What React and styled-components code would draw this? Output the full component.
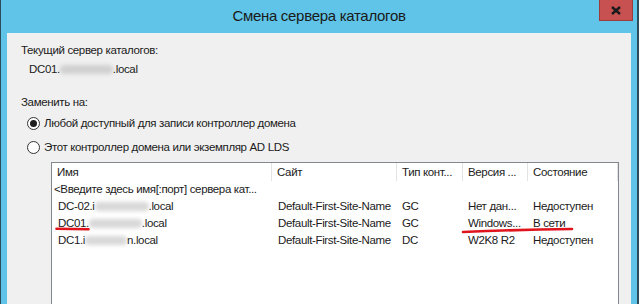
import React from 'react'
import styled, { createGlobalStyle } from 'styled-components'

const GlobalStyle = createGlobalStyle`
  html, body {
    margin: 0;
    padding: 0;
    background: #5fc4e8;
  }
  body {
    font-family: "Liberation Sans", Arial, sans-serif;
    font-size: 11.5px;
    letter-spacing: -0.35px;
    color: #1b1b1b;
  }
`

const Frame = styled.div`
  width: 639px;
  height: 304px;
  box-sizing: border-box;
  background: #5fc4e8;
  border-left: 1px solid #2c4d5c;
  border-right: 2px solid #2c4d5c;
  display: flex;
  flex-direction: column;
  overflow: hidden;
`

const TitleBar = styled.div`
  height: 33px;
  flex: none;
  display: grid;
  grid-template-columns: 1fr auto 1fr;
  align-items: start;
`

const Title = styled.div`
  grid-column: 2;
  font-size: 15px;
  letter-spacing: -0.3px;
  line-height: 32px;
  color: #1a1a1a;
`

const CloseButton = styled.div`
  grid-column: 3;
  justify-self: end;
  margin-right: 4px;
  width: 34px;
  height: 21px;
  box-sizing: border-box;
  background: #c75050;
  border: 1px solid #9b3b3b;
  border-top: none;
  display: flex;
  align-items: center;
  justify-content: center;
`

const Panel = styled.div`
  flex: 1;
  margin: 0 6px;
  background: #f0f0f0;
  padding: 9px 12px 0 14px;
  display: flex;
  flex-direction: column;
`

const Label = styled.div`
  line-height: 16px;
  margin-top: ${p => p.$top || 0}px;
`

const Value = styled.div`
  line-height: 16px;
  margin-top: 3px;
  padding-left: 8px;
`

const Blur = styled.span`
  display: inline-block;
  width: ${p => p.$w}px;
  height: 9px;
  vertical-align: -1px;
  background: #b0b0b0;
  opacity: 0.5;
  filter: blur(2.2px);
  border-radius: 4px;
`

const RadioGroup = styled.div`
  margin-top: 5px;
  padding-left: 6px;
  display: flex;
  flex-direction: column;
  gap: 8px;
`

const RadioRow = styled.div`
  display: flex;
  align-items: center;
  gap: 4px;
  line-height: 16px;
`

const RadioCircle = styled.span`
  width: 13px;
  height: 13px;
  box-sizing: border-box;
  border-radius: 50%;
  border: 1px solid #333;
  background: #fff;
  display: flex;
  align-items: center;
  justify-content: center;
  &::after {
    content: '';
    width: 7px;
    height: 7px;
    border-radius: 50%;
    background: ${p => (p.$checked ? '#1e1e1e' : 'transparent')};
  }
`

const List = styled.div`
  position: relative;
  margin: 7px 0 0 30px;
  flex: 1;
  background: #fff;
  border: 1px solid #828790;
  border-bottom: none;
`

const cols = '220px 125px 66px 65px 90px'

const HeaderRow = styled.div`
  display: grid;
  grid-template-columns: ${cols};
  height: 18px;
`

const HeaderCell = styled.div`
  padding-left: 5px;
  line-height: 18px;
  border-right: 1px solid #e3e3e3;
  white-space: nowrap;
  overflow: hidden;
`

const Row = styled.div`
  display: grid;
  grid-template-columns: ${cols};
  height: 17px;
  line-height: 17px;
`

const Cell = styled.div`
  padding-left: ${p => p.$pad ?? 5}px;
  white-space: nowrap;
  overflow: hidden;
`

const Marks = styled.svg`
  position: absolute;
  left: 0;
  top: 0;
  pointer-events: none;
`

const rows = [
  { name: ['DC-02.i', 54, '.local'], site: 'Default-First-Site-Name', type: 'GC', ver: 'Нет дан...', state: 'Недоступен' },
  { name: ['DC01.', 53, '.local'], site: 'Default-First-Site-Name', type: 'GC', ver: 'Windows...', state: 'В сети' },
  { name: ['DC1.i', 42, 'n.local'], site: 'Default-First-Site-Name', type: 'DC', ver: 'W2K8 R2', state: 'Недоступен' }
]

export default function App() {
  return (
    <>
      <GlobalStyle />
      <Frame>
        <TitleBar>
          <Title>Смена сервера каталогов</Title>
          <CloseButton>
            <svg width="10" height="9" viewBox="0 0 10 9">
              <path d="M1 1 L9 8 M9 1 L1 8" stroke="#1a1a1a" strokeWidth="2.4" />
            </svg>
          </CloseButton>
        </TitleBar>
        <Panel>
          <Label>Текущий сервер каталогов:</Label>
          <Value>
            DC01.<Blur $w={53} />.local
          </Value>
          <Label $top={17}>Заменить на:</Label>
          <RadioGroup>
            <RadioRow>
              <RadioCircle $checked />
              Любой доступный для записи контроллер домена
            </RadioRow>
            <RadioRow>
              <RadioCircle />
              Этот контроллер домена или экземпляр AD LDS
            </RadioRow>
          </RadioGroup>
          <List>
            <HeaderRow>
              <HeaderCell>Имя</HeaderCell>
              <HeaderCell>Сайт</HeaderCell>
              <HeaderCell>Тип конт...</HeaderCell>
              <HeaderCell>Версия ...</HeaderCell>
              <HeaderCell>Состояние</HeaderCell>
            </HeaderRow>
            <Row>
              <Cell $pad={2}>&lt;Введите здесь имя[:порт] сервера кат...</Cell>
            </Row>
            {rows.map(r => (
              <Row key={r.name[0]}>
                <Cell $pad={6}>
                  {r.name[0]}
                  <Blur $w={r.name[1]} />
                  {r.name[2]}
                </Cell>
                <Cell $pad={6}>{r.site}</Cell>
                <Cell>{r.type}</Cell>
                <Cell>{r.ver}</Cell>
                <Cell>{r.state}</Cell>
              </Row>
            ))}
            <Marks width="567" height="141">
              <path d="M4.5 65.8 L36.5 66.3" stroke="#e0141c" strokeWidth="2.6" strokeLinecap="round" fill="none" />
              <path d="M411 69 Q 466 66.6 520 66" stroke="#e0141c" strokeWidth="2.6" strokeLinecap="round" fill="none" />
            </Marks>
          </List>
        </Panel>
      </Frame>
    </>
  )
}
